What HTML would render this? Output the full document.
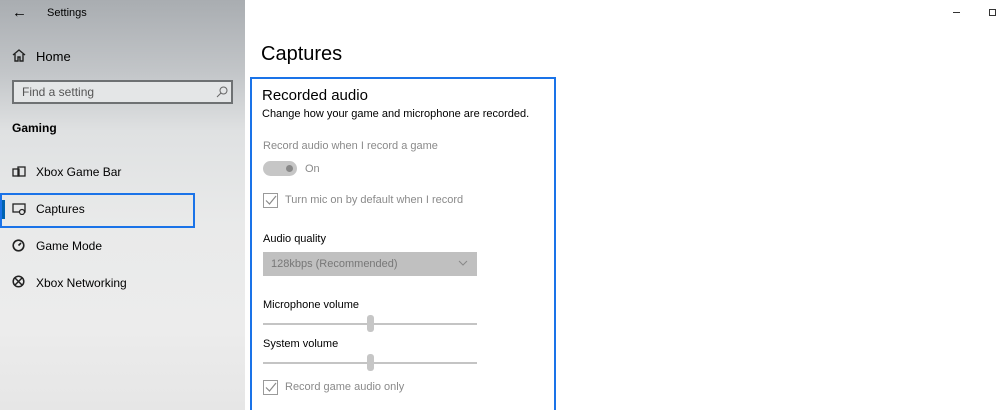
<!DOCTYPE html>
<html style="overflow:hidden;height:410px"><head><style>
*{margin:0;padding:0;box-sizing:border-box}
body{width:1000px;height:410px;overflow:hidden;background:#fff;font-family:"Liberation Sans",sans-serif;position:relative;color:#000}
.side{position:absolute;left:0;top:0;width:245px;height:410px;background:linear-gradient(180deg,#a9adb1 0%,#c3c6c9 18%,#dfe1e2 32%,#e9eaea 55%,#ececec 80%,#e6e6e6 100%)}
.t{position:absolute;white-space:nowrap}
.box{position:absolute;left:250px;top:77px;width:306px;height:350px;border:2px solid #1a73e8}
.g{color:#8a8a8a}
.cb{position:absolute;width:15px;height:15px;border:1px solid #9a9a9a}
.tr{position:absolute;height:2px;background:#c4c4c4;width:214px;left:263px}
.th{position:absolute;width:7px;height:17px;background:#c6c6c6;border-radius:3px}
</style></head><body>
<div class="side"></div>
<div class="t" style="left:12px;top:4px;font-size:15px">←</div>
<div class="t" style="left:47px;top:7px;font-size:11px">Settings</div>
<svg style="position:absolute;left:12px;top:49px" width="14" height="13" viewBox="0 0 14 13"><path d="M1 6L7 1l6 5M3 5v7h3V8h2v4h3V5" fill="none" stroke="#222" stroke-width="1.4"/></svg>
<div class="t" style="left:36px;top:49px;font-size:13px">Home</div>
<div style="position:absolute;left:12px;top:80px;width:221px;height:24px;border:2px solid #6e7173;background:#e4e6e7"></div>
<div class="t" style="left:22px;top:85px;font-size:12px;color:#555">Find a setting</div>
<svg style="position:absolute;left:216px;top:86px" width="12" height="12"><circle cx="7.5" cy="4.5" r="3.5" fill="none" stroke="#666"/><path d="M5 7l-4 4" stroke="#666"/></svg>
<div class="t" style="left:12px;top:121px;font-size:12px;font-weight:bold">Gaming</div>
<svg style="position:absolute;left:12px;top:166px" width="14" height="12"><rect x="1" y="3" width="6" height="7" fill="none" stroke="#222" stroke-width="1.3"/><rect x="6" y="1" width="7" height="9" fill="none" stroke="#222" stroke-width="1.3"/></svg>
<div class="t" style="left:36px;top:165px;font-size:12px">Xbox Game Bar</div>
<div style="position:absolute;left:0;top:193px;width:195px;height:35px;border:2px solid #1a73e8"></div>
<div style="position:absolute;left:2px;top:200px;width:3px;height:19px;background:#0063b1"></div>
<svg style="position:absolute;left:12px;top:203px" width="15" height="12"><rect x="1" y="1" width="12" height="8" fill="none" stroke="#222" stroke-width="1.3"/><circle cx="10" cy="9" r="2.5" fill="#e9eaea" stroke="#222" stroke-width="1.2"/></svg>
<div class="t" style="left:36px;top:202px;font-size:12px">Captures</div>
<svg style="position:absolute;left:12px;top:239px" width="13" height="13"><circle cx="6.5" cy="6.5" r="5.3" fill="none" stroke="#222" stroke-width="1.6"/><path d="M6.5 6.5L9 4" stroke="#222" stroke-width="1.6"/></svg>
<div class="t" style="left:36px;top:239px;font-size:12px">Game Mode</div>
<svg style="position:absolute;left:12px;top:275px" width="13" height="13"><circle cx="6.5" cy="6.5" r="5.3" fill="none" stroke="#222" stroke-width="1.5"/><path d="M3 3l7 7M10 3l-7 7" stroke="#222" stroke-width="1.5"/></svg>
<div class="t" style="left:36px;top:276px;font-size:12px">Xbox Networking</div>
<div style="position:absolute;left:953px;top:12px;width:7px;height:1px;background:#333"></div>
<div style="position:absolute;left:989px;top:9px;width:7px;height:7px;border:1px solid #333"></div>
<div class="t" style="left:261px;top:43px;font-size:20px">Captures</div>
<div class="box"></div>
<div class="t" style="left:262px;top:87px;font-size:15px">Recorded audio</div>
<div class="t" style="left:262px;top:108px;font-size:11px">Change how your game and microphone are recorded.</div>
<div class="t g" style="left:263px;top:140px;font-size:11px">Record audio when I record a game</div>
<div style="position:absolute;left:263px;top:161px;width:34px;height:15px;border-radius:8px;background:#c6c6c6"></div>
<div style="position:absolute;left:286px;top:165px;width:7px;height:7px;border-radius:50%;background:#888"></div>
<div class="t g" style="left:305px;top:163px;font-size:11px">On</div>
<div class="cb" style="left:263px;top:193px"></div>
<svg style="position:absolute;left:263px;top:193px" width="15" height="15"><path d="M3 7.5l3.5 3.5L13 3" fill="none" stroke="#8a8a8a" stroke-width="1.2"/></svg>
<div class="t g" style="left:285px;top:194px;font-size:11px">Turn mic on by default when I record</div>
<div class="t" style="left:263px;top:233px;font-size:11px">Audio quality</div>
<div style="position:absolute;left:263px;top:252px;width:214px;height:24px;background:#c0c0c0"></div>
<div class="t" style="left:271px;top:258px;font-size:11px;color:#777">128kbps (Recommended)</div>
<svg style="position:absolute;left:458px;top:260px" width="10" height="6"><path d="M1 1l4 4 4-4" fill="none" stroke="#888"/></svg>
<div class="t" style="left:263px;top:299px;font-size:11px">Microphone volume</div>
<div class="tr" style="top:323px"></div><div class="th" style="left:367px;top:315px"></div>
<div class="t" style="left:263px;top:338px;font-size:11px">System volume</div>
<div class="tr" style="top:362px"></div><div class="th" style="left:367px;top:354px"></div>
<div class="cb" style="left:263px;top:380px"></div>
<svg style="position:absolute;left:263px;top:380px" width="15" height="15"><path d="M3 7.5l3.5 3.5L13 3" fill="none" stroke="#8a8a8a" stroke-width="1.2"/></svg>
<div class="t g" style="left:285px;top:381px;font-size:11px">Record game audio only</div>
</body></html>
